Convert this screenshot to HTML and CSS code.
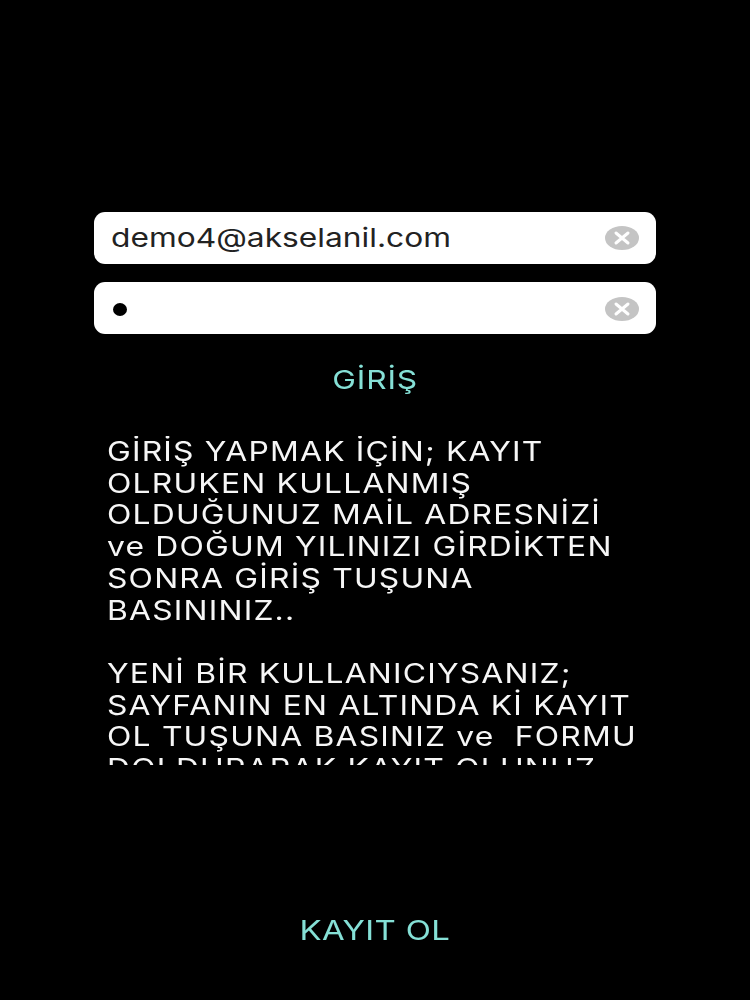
FILE: index.html
```html
<!DOCTYPE html>
<html lang="tr">
<head>
<meta charset="utf-8">
<title>Giriş</title>
<link rel="stylesheet" href="styles.css">
</head>
<body>
<main class="page">
  <form class="form">
    <div class="field">
      <span class="value">demo4@akselanil.com</span>
      <svg class="clear" viewBox="0 0 34 24"><ellipse cx="17" cy="12" rx="17" ry="12" fill="#c4c4c4"/><path d="M11 7 23 17M23 7 11 17" stroke="#fff" stroke-width="3" stroke-linecap="round"/></svg>
    </div>
    <div class="field">
      <span class="dot"></span>
      <svg class="clear clear-low" viewBox="0 0 34 24"><ellipse cx="17" cy="12" rx="17" ry="12" fill="#c4c4c4"/><path d="M11 7 23 17M23 7 11 17" stroke="#fff" stroke-width="3" stroke-linecap="round"/></svg>
    </div>
  </form>
  <div class="login">GİRİŞ</div>
  <div class="info">
    <p>GİRİŞ YAPMAK İÇİN; KAYIT<br>OLRUKEN KULLANMIŞ<br>OLDUĞUNUZ MAİL ADRESNİZİ<br>ve DOĞUM YILINIZI GİRDİKTEN<br>SONRA GİRİŞ TUŞUNA<br>BASININIZ..</p>
    <p>YENİ BİR KULLANICIYSANIZ;<br>SAYFANIN EN ALTINDA Kİ KAYIT<br>OL TUŞUNA BASINIZ ve&nbsp; FORMU<br>DOLDURARAK KAYIT OLUNUZ</p>
  </div>
  <div class="register">KAYIT OL</div>
</main>
</body>
</html>
```
FILE: styles.css
```css
html, body { margin: 0; padding: 0; background: #000; }
.page {
  width: 750px; height: 1000px; box-sizing: border-box;
  padding-top: 212px; display: flex; flex-direction: column; align-items: center;
  font-family: Inter, "Liberation Sans", Arial, sans-serif; overflow: hidden;
  filter: blur(0.4px);
}
.form { display: flex; flex-direction: column; gap: 18px; }
.field {
  width: 562px; height: 52px; box-sizing: border-box; background: #fff; border-radius: 11px;
  padding: 0 17px; display: flex; align-items: center; justify-content: space-between;
  color: #222;
}
.value { font-size: 26px; padding-bottom: 2px; transform: scaleX(1.22); transform-origin: left center; }
.dot { width: 14px; height: 13px; border-radius: 50%; background: #000; margin: 2px 0 0 2px; }
.clear { width: 34px; height: 24px; flex: none; }
.clear-low { margin-top: 2px; }
.login { margin-top: 28px; height: 36px; line-height: 36px; font-size: 26px; letter-spacing: 0.7px; color: #85e0d6; transform: scaleX(1.22); }
.info {
  align-self: flex-start; margin: 38px 0 0 107px; width: 540px; height: 329px; overflow: hidden;
  color: #f6f6f6; font-size: 27px; line-height: 31.7px; letter-spacing: 1px; white-space: nowrap;
  transform: scaleX(1.18); transform-origin: left top;
}
.info p { margin: 0 0 31.7px; }
.register { margin-top: 148px; height: 36px; line-height: 36px; font-size: 27px; letter-spacing: 0.3px; color: #85e0d6; transform: scaleX(1.22); }
```
